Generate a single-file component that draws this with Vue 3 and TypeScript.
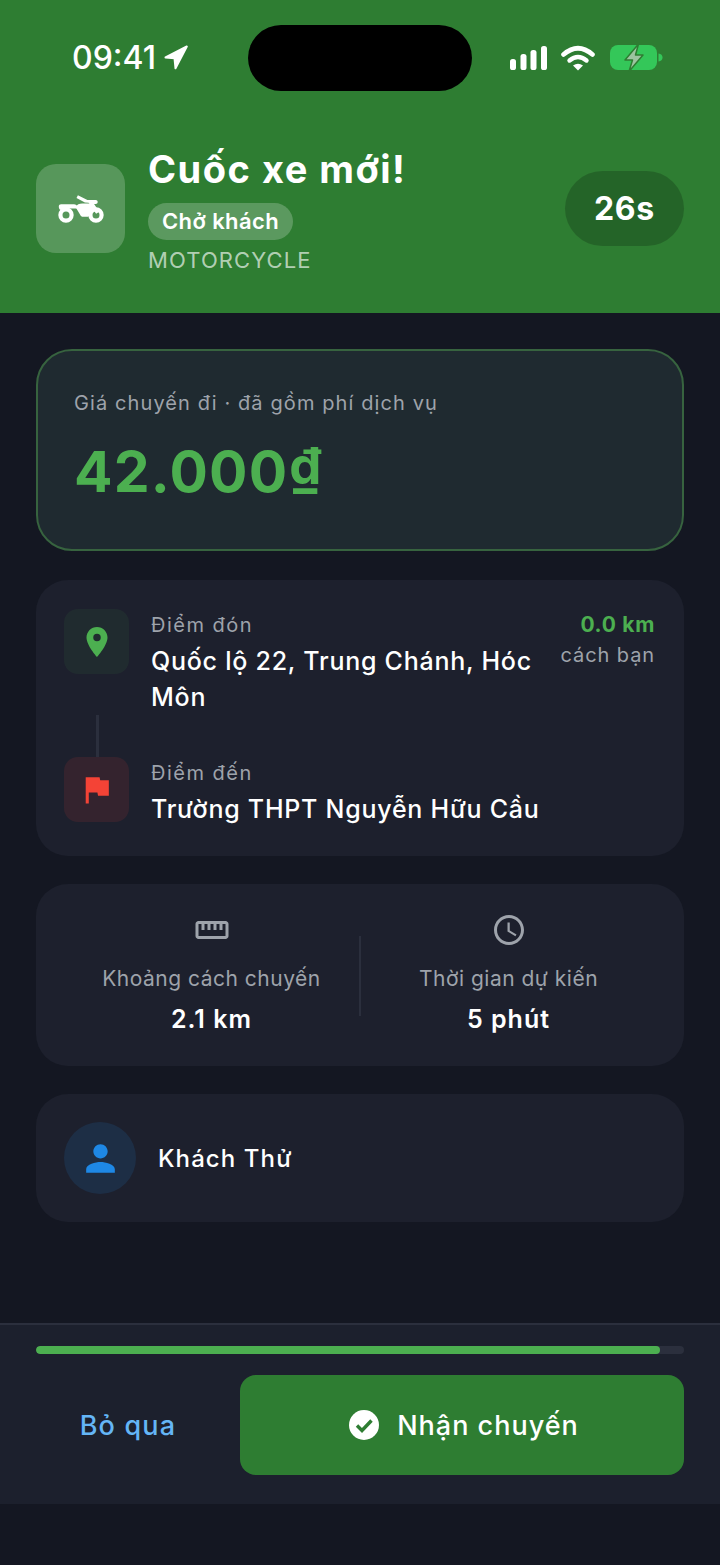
<script setup lang="ts">
const progress: number = 96.3
</script>

<template>
  <div class="screen">
    <header class="header">
      <div class="status">
        <div class="status-left">
          <span class="time">09:41</span>
          <svg class="loc" viewBox="0 0 24 25" width="24" height="25"><path d="M1.500 12.500 22.800 1.500 11.500 23.300 10.500 13.200Z" fill="#fff" stroke="#fff" stroke-width="2" stroke-linejoin="round" /></svg>
        </div>
        <div class="island"></div>
        <div class="status-right">
          <svg viewBox="0 0 37 24" width="37" height="24" class="signal">
            <rect x="0" y="13" width="6" height="11" rx="2.600" />
            <rect x="10.500" y="8" width="6" height="16" rx="2.600" />
            <rect x="20.500" y="4" width="6" height="20" rx="2.600" />
            <rect x="31" y="0" width="6" height="24" rx="2.600" />
          </svg>
          <svg viewBox="0 0 34 26" width="34" height="26" class="wifi">
            <path d="M2.500 9.500Q17-3 31.500 9.500" fill="none" stroke="#fff" stroke-width="4.600" stroke-linecap="round" />
            <path d="M8.500 15.500Q17 8.500 25.500 15.500" fill="none" stroke="#fff" stroke-width="4.400" stroke-linecap="round" />
            <path d="M12 20.600Q17 17 22 20.600L17 25.600Z" fill="#fff" />
          </svg>
          <svg viewBox="0 0 53 28" width="53" height="28" class="battery">
            <rect x="0" y="1" width="47" height="25" rx="8" fill="#34c759" />
            <path d="M48.500 9.500c2.600.4 4 1.900 4 4s-1.400 3.600-4 4z" fill="#34c759" />
            <path d="M28.500 0 15 16h7.500L19 27.500 33 11h-7.500z" fill="#9cc3a0" stroke="#2e7d32" stroke-width="1.500" stroke-linejoin="round" />
          </svg>
        </div>
      </div>
      <div class="job">
        <div class="job-icon">
          <svg viewBox="0 0 46 28" width="46" height="28">
            <circle cx="8" cy="20" r="5.600" fill="none" stroke="#fff" stroke-width="4.200" />
            <circle cx="38" cy="20" r="5.600" fill="none" stroke="#fff" stroke-width="4.200" />
            <path d="M.8 11.500c0-1.400.9-2.300 2.300-2.300H16c1.500 0 2.500.7 3 1.900l.9 2.300H9.500c-2.800 0-5.800.6-7.300 1.700-.9-1-1.400-2.300-1.400-3.600z" fill="#fff" />
            <path d="M17.500 12c1.500-2.600 3.800-3.600 6.800-3.600h6.500c1.800 0 3 1.200 3.800 3l1.200 2.700c-2.400 1.300-3.800 3.300-4.400 5.800-.3 1.300-1 1.900-2.300 1.900h-3.800c-1.600 0-2.700-.8-3.300-2.300z" fill="#fff" />
            <path d="M18.500 3l1.400-2.800 9.500 4.700h8.300c1.200 0 2 .9 2 2s-.8 2-2 2h-1.600l5.200 7.800-3.200 2-7.500-11-3.700-.3z" fill="#fff" />
          </svg>
        </div>
        <div class="job-text">
          <div class="title">Cuốc xe mới!</div>
          <div class="chip">Chở khách</div>
          <div class="kind">MOTORCYCLE</div>
        </div>
        <div class="timer">26s</div>
      </div>
    </header>

    <main class="content">
      <section class="price-card">
        <div class="price-label">Giá chuyến đi · đã gồm phí dịch vụ</div>
        <div class="price-value">42.000<span class="currency">₫</span></div>
      </section>

      <section class="card route">
        <div class="stop pickup">
          <div class="stop-icon green">
            <svg viewBox="0 0 24 24" width="36" height="36"><path d="M12 2C8.130 2 5 5.130 5 9c0 5.250 7 13 7 13s7-7.750 7-13c0-3.870-3.130-7-7-7zm0 9.500a2.500 2.500 0 0 1 0-5 2.500 2.500 0 0 1 0 5z" fill="#4caf50" /></svg>
          </div>
          <div class="stop-text">
            <div class="stop-label">Điểm đón</div>
            <div class="stop-name">Quốc lộ 22, Trung Chánh, Hóc Môn</div>
          </div>
          <div class="away">
            <div class="away-km">0.0 km</div>
            <div class="away-label">cách bạn</div>
          </div>
        </div>
        <div class="connector"></div>
        <div class="stop">
          <div class="stop-icon red">
            <svg viewBox="0 0 24 24" width="37" height="37"><path d="M14.400 6 14 4H5v17h2v-7h5.600l.4 2h7V6z" fill="#f44336" /></svg>
          </div>
          <div class="stop-text">
            <div class="stop-label">Điểm đến</div>
            <div class="stop-name">Trường THPT Nguyễn Hữu Cầu</div>
          </div>
        </div>
      </section>

      <section class="card stats">
        <div class="stat">
          <svg viewBox="0 0 24 24" width="36" height="36"><path d="M21 6H3c-1.100 0-2 .9-2 2v8c0 1.100.9 2 2 2h18c1.100 0 2-.9 2-2V8c0-1.100-.9-2-2-2zm0 10H3V8h2v4h2V8h2v4h2V8h2v4h2V8h2v4h2V8h2v8z" fill="#9ea3ab" /></svg>
          <div class="stat-label">Khoảng cách chuyến</div>
          <div class="stat-value">2.1 km</div>
        </div>
        <div class="divider"></div>
        <div class="stat">
          <svg viewBox="0 0 24 24" width="36" height="36"><path d="M11.990 2C6.470 2 2 6.480 2 12s4.470 10 9.990 10C17.520 22 22 17.520 22 12S17.520 2 11.990 2zM12 20c-4.420 0-8-3.580-8-8s3.580-8 8-8 8 3.580 8 8-3.580 8-8 8zm.5-13H11v6l5.250 3.150.75-1.230-4.500-2.670z" fill="#9ea3ab" /></svg>
          <div class="stat-label">Thời gian dự kiến</div>
          <div class="stat-value">5 phút</div>
        </div>
      </section>

      <section class="card person">
        <div class="avatar">
          <svg viewBox="0 0 24 24" width="43" height="43"><path d="M12 12c2.210 0 4-1.790 4-4s-1.790-4-4-4-4 1.790-4 4 1.790 4 4 4zm0 2c-2.670 0-8 1.340-8 4v2h16v-2c0-2.660-5.330-4-8-4z" fill="#1e88e5" /></svg>
        </div>
        <div class="person-name">Khách Thử</div>
      </section>
    </main>

    <footer class="footer">
      <div class="track"><div class="fill" :style="{ width: progress + '%' }"></div></div>
      <div class="actions">
        <button class="skip" type="button">Bỏ qua</button>
        <button class="accept" type="button">
          <svg viewBox="0 0 30 30" width="30" height="30"><circle cx="15" cy="15" r="15" fill="#fff" /><path d="M8 15.500l5 5 9.500-10" fill="none" stroke="#2e7d32" stroke-width="3.400" /></svg>
          <span>Nhận chuyến</span>
        </button>
      </div>
    </footer>
  </div>
</template>

<style>
html, body { margin: 0; background: #141722; }
</style>

<style scoped>
.screen {
  width: 720px;
  height: 1565px;
  display: flex;
  flex-direction: column;
  background: #141722;
  font-family: Inter, "Noto Sans", sans-serif;
  color: #fff;
  padding-bottom: 61px;
  box-sizing: border-box;
  overflow: hidden;
}
.header {
  background: #2e7d32;
  height: 313px;
  box-sizing: border-box;
  padding-top: 25px;
  flex: none;
}
.status {
  display: grid;
  grid-template-columns: 248px 224px 1fr;
  height: 66px;
  align-items: center;
}
.status-left {
  display: flex;
  align-items: center;
  padding-left: 72px;
  gap: 8px;
}
.time { font-size: 32px; font-weight: 500; line-height: 40px; }
.loc { margin-top: -2px; }
.island { height: 66px; border-radius: 33px; background: #000; }
.status-right {
  display: flex;
  align-items: center;
  justify-content: flex-end;
  padding-right: 57px;
}
.signal { fill: #fff; margin-right: 14px; }
.wifi { margin-right: 15px; }
.job {
  display: flex;
  align-items: center;
  margin-top: 55px;
  padding: 0 36px;
  height: 125px;
}
.job-icon {
  width: 89px;
  height: 89px;
  border-radius: 20px;
  background: rgba(255, 255, 255, 0.2);
  display: flex;
  align-items: center;
  justify-content: center;
  flex: none;
  margin-right: 23px;
}
.job-text { flex: 1; min-width: 0; padding-top: 2px; }
.title { font-size: 38px; font-weight: 700; line-height: 44px; margin-bottom: 12px; letter-spacing: 1.500px; }
.chip {
  display: inline-block;
  height: 37px;
  line-height: 37px;
  padding: 0 14px;
  border-radius: 19px;
  background: rgba(255, 255, 255, 0.22);
  font-size: 22px;
  font-weight: 600;
  letter-spacing: 0.400px;
  vertical-align: top;
}
.kind {
  margin-top: 8px;
  font-size: 22px;
  line-height: 24px;
  letter-spacing: 1.100px;
  color: rgba(255, 255, 255, 0.65);
}
.timer {
  width: 119px;
  height: 75px;
  line-height: 75px;
  text-align: center;
  border-radius: 38px;
  background: rgba(0, 0, 0, 0.2);
  font-size: 32px;
  font-weight: 700;
  letter-spacing: 0.700px;
  flex: none;
}
.content {
  flex: 1;
  min-height: 0;
  padding: 36px 36px 0;
  display: flex;
  flex-direction: column;
  gap: 28px;
}
.price-card {
  height: 202px;
  box-sizing: border-box;
  margin-bottom: 1px;
  padding: 36px 36px;
  border: 2px solid #37633f;
  border-radius: 36px;
  background: #1f2a30;
}
.price-label { font-size: 20px; line-height: 32px; color: #9ea3ab; letter-spacing: 1.100px; }
.price-value {
  margin-top: 17px;
  font-size: 57px;
  line-height: 72px;
  font-weight: 700;
  color: #4caf50;
  letter-spacing: 1.200px;
}
.currency { font-size: 51px; line-height: 0; vertical-align: 8px; margin-left: 1px; }
.card { background: #1d202d; border-radius: 32px; }
.route { padding: 29px 29px 29px 28px; height: 276px; box-sizing: border-box; }
.stop { display: flex; align-items: flex-start; }
.pickup { height: 106px; }
.stop-icon {
  width: 65px;
  height: 65px;
  border-radius: 14px;
  display: flex;
  align-items: center;
  justify-content: center;
  flex: none;
  margin-right: 22px;
}
.green { background: rgba(76, 175, 80, 0.08); }
.red { background: rgba(244, 67, 54, 0.11); }
.stop-text { flex: 1; min-width: 0; padding-top: 1px; }
.stop-label { font-size: 20px; line-height: 31px; color: #9ea3ab; margin-bottom: 2px; letter-spacing: 1.500px; }
.stop-name { font-size: 25px; line-height: 36px; font-weight: 500; color: #fff; letter-spacing: 0.750px; }
.away { text-align: right; flex: none; margin-left: 16px; }
.away-km { font-size: 21px; line-height: 31px; font-weight: 700; color: #4caf50; letter-spacing: 0.700px; }
.away-label { font-size: 20px; line-height: 31px; color: #9ea3ab; letter-spacing: 0.900px; }
.connector { width: 3px; height: 42px; margin-left: 32px; background: #2b2f3d; }
.stats { height: 182px; box-sizing: border-box; padding: 27px 28px 31px; display: flex; align-items: center; }
.stat { flex: 1; display: flex; flex-direction: column; align-items: center; }
.stat-label { margin-top: 16px; font-size: 21px; line-height: 30px; color: #9ea3ab; letter-spacing: 0.500px; }
.stat-value { margin-top: 10px; font-size: 25px; line-height: 30px; font-weight: 600; color: #fff; letter-spacing: 1px; }
.divider { width: 2px; height: 80px; background: #2b2f3d; flex: none; margin-top: 6px; }
.person { height: 128px; box-sizing: border-box; padding: 0 28px; display: flex; align-items: center; }
.avatar {
  width: 72px;
  height: 72px;
  border-radius: 50%;
  background: rgba(33, 150, 243, 0.12);
  display: flex;
  align-items: center;
  justify-content: center;
  margin-right: 22px;
}
.person-name { font-size: 24px; font-weight: 500; letter-spacing: 1.100px; }
.footer {
  height: 181px;
  box-sizing: border-box;
  flex: none;
  border-top: 2px solid #2b2f3d;
  background: #1c202d;
  padding: 21px 36px 0;
}
.track { height: 8px; border-radius: 4px; background: #2b2f3d; overflow: hidden; }
.fill { height: 100%; border-radius: 4px; background: #4caf50; }
.actions { display: flex; gap: 20px; margin-top: 21px; }
.skip {
  width: 184px;
  height: 100px;
  padding: 0;
  border: 0;
  background: none;
  font: 500 27px Inter, "Noto Sans", sans-serif;
  letter-spacing: 1.200px;
  color: #64b5f6;
}
.accept {
  flex: 1;
  height: 100px;
  padding: 0 0 0 4px;
  border: 0;
  border-radius: 16px;
  background: #2e7d32;
  color: #fff;
  font: 500 27px Inter, "Noto Sans", sans-serif;
  letter-spacing: 1px;
  display: flex;
  align-items: center;
  justify-content: center;
  gap: 18px;
}
</style>
